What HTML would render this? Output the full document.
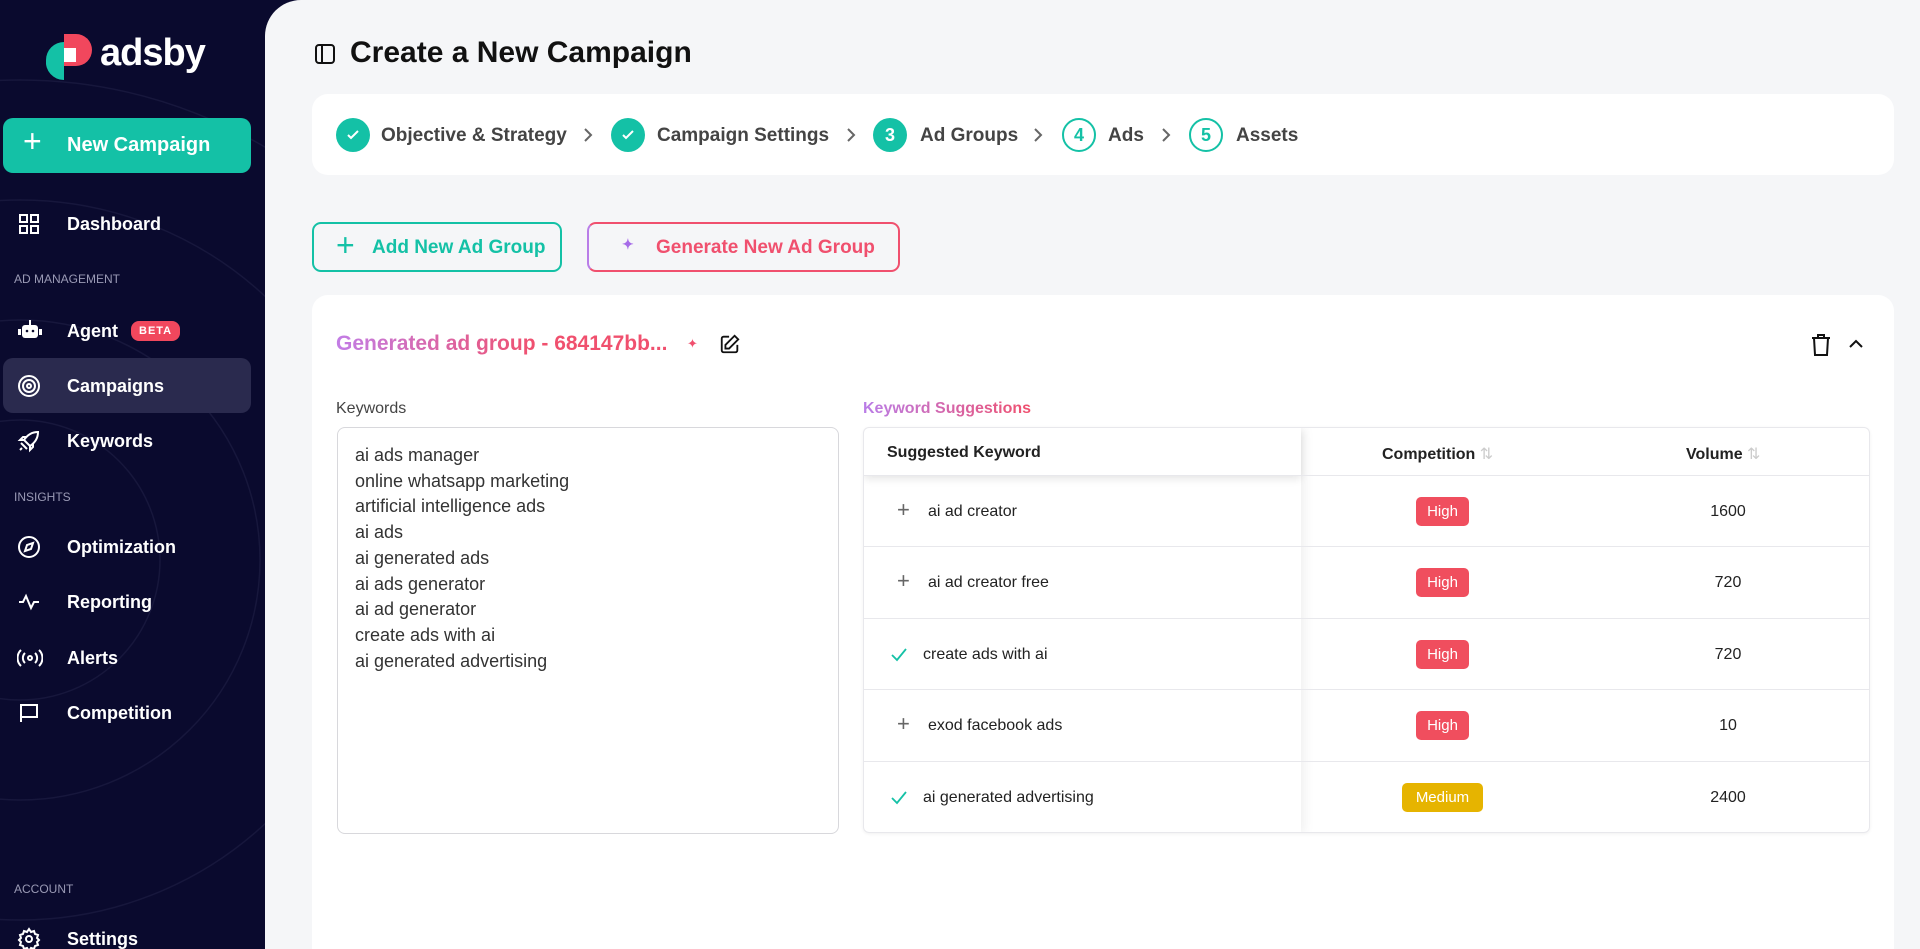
<!DOCTYPE html>
<html><head><meta charset="utf-8">
<style>
*{box-sizing:border-box;margin:0;padding:0}
html,body{width:1920px;height:949px;overflow:hidden}
body{background:#0a0a2e;font-family:"Liberation Sans",sans-serif;position:relative}
.sb{position:absolute;left:0;top:0;width:265px;height:949px;background:#0a0a2e;overflow:hidden}
.main{position:absolute;left:265px;top:0;width:1655px;height:949px;background:#f5f6f8;border-top-left-radius:36px}
.nav{position:absolute;left:0;width:265px;color:#fff;font-size:18px;font-weight:bold;display:flex;align-items:center}
.nav svg{position:absolute;left:17px}
.nav span.t{position:absolute;left:67px}
.sec{position:absolute;left:14px;color:#9a9ab5;font-size:12px}
.abs{position:absolute}
.step{position:absolute;top:118px;width:34px;height:34px;border-radius:50%;display:flex;align-items:center;justify-content:center;font-size:18px;font-weight:bold}
.full{background:#14c1a6;color:#fff}
.out{border:2px solid #14c1a6;color:#14c1a6}
.sl{position:absolute;top:125px;font-size:19px;font-weight:bold;color:#444}
.chev{position:absolute;top:126px}
.row{position:absolute;left:0;width:1007px;height:72px;border-top:1px solid #e8e8ec}
.badge{position:absolute;height:29px;border-radius:5px;color:#fff;font-size:15px;display:flex;align-items:center;justify-content:center}
.kw{position:absolute;font-size:16px;color:#222}
.vol{position:absolute;font-size:16px;color:#222;width:100px;text-align:center;left:814px}
</style></head><body>
<div class="sb">
<svg class="abs" style="left:0;top:0" width="265" height="949"><g fill="none" stroke="#17173c" stroke-width="1.5"><circle cx="20" cy="560" r="140"/><circle cx="20" cy="560" r="240"/><circle cx="20" cy="560" r="360"/><circle cx="20" cy="560" r="480"/></g></svg>
<svg class="abs" style="left:46px;top:34px" width="50" height="48" viewBox="0 0 50 48"><path d="M18 0h12a16 16 0 0 1 0 32h-12z" fill="#f1475d"/><path d="M0 26a18 18 0 0 1 18-18h0v38a18 18 0 0 1-18-20z" fill="#14c1a6"/><rect x="18" y="14" width="12" height="14" fill="#fff"/></svg>
<div class="abs" style="left:100px;top:32px;color:#fff;font-size:38px;font-weight:bold;letter-spacing:-1px">adsby</div>
<div class="abs" style="left:3px;top:118px;width:248px;height:55px;background:#14c1a6;border-radius:10px;color:#fff;font-size:20px;font-weight:bold;display:flex;align-items:center"><span style="position:absolute;left:20px;font-size:32px;font-weight:normal;top:5px">+</span><span style="position:absolute;left:64px">New Campaign</span></div>
<div class="nav" style="top:212px;height:24px"><svg width="24" height="24" viewBox="0 0 24 24" fill="none" stroke="#fff" stroke-width="2"><rect x="3" y="3" width="7" height="7"/><rect x="14" y="3" width="7" height="7"/><rect x="3" y="14" width="7" height="7"/><rect x="14" y="14" width="7" height="7"/></svg><span class="t">Dashboard</span></div>
<div class="sec" style="top:272px">AD MANAGEMENT</div>
<div class="nav" style="top:319px;height:24px"><svg width="26" height="24" viewBox="0 0 26 24"><rect x="5" y="6" width="16" height="13" rx="3" fill="#fff"/><rect x="12" y="1" width="2" height="5" fill="#fff"/><rect x="1" y="10" width="3" height="6" fill="#fff"/><rect x="22" y="10" width="3" height="6" fill="#fff"/><circle cx="10" cy="12" r="1.3" fill="#0a0a2e"/><circle cx="16" cy="12" r="1.3" fill="#0a0a2e"/></svg><span class="t">Agent</span><span style="position:absolute;left:131px;background:#f1475d;color:#fff;font-size:11px;padding:4px 8px;border-radius:8px;letter-spacing:1px">BETA</span></div>
<div class="abs" style="left:3px;top:358px;width:248px;height:55px;background:#2a2a4e;border-radius:10px"></div>
<div class="nav" style="top:374px;height:24px"><svg width="24" height="24" viewBox="0 0 24 24" fill="none" stroke="#fff" stroke-width="2"><circle cx="12" cy="12" r="10"/><circle cx="12" cy="12" r="6"/><circle cx="12" cy="12" r="2"/></svg><span class="t">Campaigns</span></div>
<div class="nav" style="top:429px;height:24px"><svg width="24" height="24" viewBox="0 0 24 24" fill="none" stroke="#fff" stroke-width="2"><path d="M4 14l6 6M7 11c4-6 9-8 14-8-0 5-2 10-8 14l-6-6zM7 11H3l3-3h4M13 17v4l3-3v-4M5 19l-2 2"/></svg><span class="t">Keywords</span></div>
<div class="sec" style="top:490px">INSIGHTS</div>
<div class="nav" style="top:535px;height:24px"><svg width="24" height="24" viewBox="0 0 24 24" fill="none" stroke="#fff" stroke-width="2"><circle cx="12" cy="12" r="10"/><path d="M16 8l-2 6-6 2 2-6z"/></svg><span class="t">Optimization</span></div>
<div class="nav" style="top:590px;height:24px"><svg width="24" height="24" viewBox="0 0 24 24" fill="none" stroke="#fff" stroke-width="2"><path d="M2 12h4l3-6 5 12 3-6h5"/></svg><span class="t">Reporting</span></div>
<div class="nav" style="top:646px;height:24px"><svg width="26" height="24" viewBox="0 0 26 24" fill="none" stroke="#fff" stroke-width="2"><circle cx="13" cy="12" r="2"/><path d="M8 7a7 7 0 0 0 0 10M18 7a7 7 0 0 1 0 10M4 4a11 11 0 0 0 0 16M22 4a11 11 0 0 1 0 16"/></svg><span class="t">Alerts</span></div>
<div class="nav" style="top:701px;height:24px"><svg width="24" height="24" viewBox="0 0 24 24" fill="none" stroke="#fff" stroke-width="2"><path d="M4 21V4h16v12H4"/></svg><span class="t">Competition</span></div>
<div class="sec" style="top:882px">ACCOUNT</div>
<div class="nav" style="top:927px;height:24px"><svg width="24" height="24" viewBox="0 0 24 24" fill="none" stroke="#fff" stroke-width="2"><circle cx="12" cy="12" r="3"/><path d="M12 2l2 3 3-1 1 3 3 1-1 3 2 2-2 2 1 3-3 1-1 3-3-1-2 3-2-3-3 1-1-3-3-1 1-3-2-2 2-2-1-3 3-1 1-3 3 1z"/></svg><span class="t">Settings</span></div>
</div>

<div class="main"></div>
<svg class="abs" style="left:313px;top:42px" width="24" height="24" viewBox="0 0 24 24" fill="none" stroke="#111" stroke-width="2"><rect x="3" y="3" width="18" height="18" rx="3"/><path d="M9 3v18"/></svg>
<div class="abs" style="left:350px;top:36px;font-size:30px;font-weight:bold;color:#111">Create a New Campaign</div>

<div class="abs" style="left:312px;top:94px;width:1582px;height:81px;background:#fff;border-radius:16px"></div>
<div class="step full" style="left:336px"><svg width="16" height="16" viewBox="0 0 16 16" fill="none" stroke="#fff" stroke-width="2"><path d="M3 8l3 3 7-7"/></svg></div>
<div class="sl" style="left:381px">Objective &amp; Strategy</div>
<svg class="chev" style="left:582px" width="12" height="18" viewBox="0 0 12 18" fill="none" stroke="#666" stroke-width="2"><path d="M3 3l6 6-6 6"/></svg>
<div class="step full" style="left:611px"><svg width="16" height="16" viewBox="0 0 16 16" fill="none" stroke="#fff" stroke-width="2"><path d="M3 8l3 3 7-7"/></svg></div>
<div class="sl" style="left:657px">Campaign Settings</div>
<svg class="chev" style="left:845px" width="12" height="18" viewBox="0 0 12 18" fill="none" stroke="#666" stroke-width="2"><path d="M3 3l6 6-6 6"/></svg>
<div class="step full" style="left:873px">3</div>
<div class="sl" style="left:920px">Ad Groups</div>
<svg class="chev" style="left:1032px" width="12" height="18" viewBox="0 0 12 18" fill="none" stroke="#666" stroke-width="2"><path d="M3 3l6 6-6 6"/></svg>
<div class="step out" style="left:1062px">4</div>
<div class="sl" style="left:1108px">Ads</div>
<svg class="chev" style="left:1160px" width="12" height="18" viewBox="0 0 12 18" fill="none" stroke="#666" stroke-width="2"><path d="M3 3l6 6-6 6"/></svg>
<div class="step out" style="left:1189px">5</div>
<div class="sl" style="left:1236px">Assets</div>

<div class="abs" style="left:312px;top:222px;width:250px;height:50px;border:2px solid #14c1a6;border-radius:9px;color:#14c1a6;font-size:19px;font-weight:bold"><span style="position:absolute;left:22px;top:3px;font-size:32px;font-weight:normal">+</span><span style="position:absolute;left:58px;top:13px">Add New Ad Group</span></div>
<div class="abs" style="left:587px;top:222px;width:313px;height:50px;border:2px solid #f0506e;border-left-color:#b97de8;border-radius:9px;color:#f0506e;font-size:19px;font-weight:bold"><span style="position:absolute;left:33px;top:12px;color:#a66be8;font-size:14px">✦</span><span style="position:absolute;left:67px;top:13px">Generate New Ad Group</span></div>

<div class="abs" style="left:312px;top:295px;width:1582px;height:654px;background:#fff;border-radius:16px 16px 0 0"></div>
<div class="abs" style="left:336px;top:332px;font-size:21px;font-weight:bold;background:linear-gradient(90deg,#c27de6,#f0506e 60%);-webkit-background-clip:text;color:transparent">Generated ad group - 684147bb...</div>
<div class="abs" style="left:687px;top:336px;color:#f0506e;font-size:13px">✦</div>
<svg class="abs" style="left:719px;top:333px" width="22" height="22" viewBox="0 0 24 24" fill="none" stroke="#111" stroke-width="2"><path d="M11 4H5a2 2 0 0 0-2 2v13a2 2 0 0 0 2 2h13a2 2 0 0 0 2-2v-6"/><path d="M17 3l4 4-10 10H7v-4z"/></svg>
<svg class="abs" style="left:1810px;top:333px" width="22" height="24" viewBox="0 0 22 24" fill="none" stroke="#111" stroke-width="2"><path d="M2 5h18M8 5V2h6v3M4 5l1 17h12l1-17"/></svg>
<svg class="abs" style="left:1847px;top:336px" width="18" height="16" viewBox="0 0 18 16" fill="none" stroke="#111" stroke-width="2"><path d="M3 11l6-6 6 6"/></svg>

<div class="abs" style="left:336px;top:400px;font-size:16px;color:#444">Keywords</div>
<div class="abs" style="left:337px;top:427px;width:502px;height:407px;border:1px solid #d8d8dc;border-radius:8px;padding:15px 17px;font-size:18px;line-height:25.7px;color:#333">ai ads manager<br>online whatsapp marketing<br>artificial intelligence ads<br>ai ads<br>ai generated ads<br>ai ads generator<br>ai ad generator<br>create ads with ai<br>ai generated advertising</div>

<div class="abs" style="left:863px;top:400px;font-size:16px;font-weight:bold;background:linear-gradient(90deg,#b97de8,#f0506e);-webkit-background-clip:text;color:transparent">Keyword Suggestions</div>
<div class="abs" style="left:863px;top:427px;width:1007px;height:406px;border:1px solid #e8e8ec;border-radius:6px;overflow:hidden;box-shadow:0 1px 3px rgba(0,0,0,.06)">
<div class="abs" style="left:0;top:0;width:437px;height:406px;box-shadow:4px 0 10px rgba(0,0,0,.06)"></div>
<div class="abs" style="left:0;top:0;width:437px;height:47px;box-shadow:0 4px 8px rgba(0,0,0,.1)"></div>
<div class="kw" style="left:23px;top:16px;font-weight:bold">Suggested Keyword</div>
<div class="kw" style="left:518px;top:16px;font-weight:bold">Competition <span style="color:#ccc;font-weight:normal">⇅</span></div>
<div class="kw" style="left:822px;top:16px;font-weight:bold">Volume <span style="color:#ccc;font-weight:normal">⇅</span></div>
<div class="row" style="top:47px"><span class="kw" style="left:33px;top:21px;color:#666;font-size:22px">+</span><span class="kw" style="left:64px;top:27px">ai ad creator</span><div class="badge" style="left:552px;top:21px;width:53px;background:#f04e5e">High</div><span class="vol" style="top:27px">1600</span></div>
<div class="row" style="top:118px"><span class="kw" style="left:33px;top:21px;color:#666;font-size:22px">+</span><span class="kw" style="left:64px;top:27px">ai ad creator free</span><div class="badge" style="left:552px;top:21px;width:53px;background:#f04e5e">High</div><span class="vol" style="top:27px">720</span></div>
<div class="row" style="top:190px"><svg class="abs" style="left:26px;top:28px" width="18" height="16" viewBox="0 0 18 16" fill="none" stroke="#14c1a6" stroke-width="1.8"><path d="M2 8l5 5 9-11"/></svg><span class="kw" style="left:59px;top:27px">create ads with ai</span><div class="badge" style="left:552px;top:21px;width:53px;background:#f04e5e">High</div><span class="vol" style="top:27px">720</span></div>
<div class="row" style="top:261px"><span class="kw" style="left:33px;top:21px;color:#666;font-size:22px">+</span><span class="kw" style="left:64px;top:27px">exod facebook ads</span><div class="badge" style="left:552px;top:21px;width:53px;background:#f04e5e">High</div><span class="vol" style="top:27px">10</span></div>
<div class="row" style="top:333px"><svg class="abs" style="left:26px;top:28px" width="18" height="16" viewBox="0 0 18 16" fill="none" stroke="#14c1a6" stroke-width="1.8"><path d="M2 8l5 5 9-11"/></svg><span class="kw" style="left:59px;top:27px">ai generated advertising</span><div class="badge" style="left:538px;top:21px;width:81px;background:#e6b400">Medium</div><span class="vol" style="top:27px">2400</span></div>
</div>
</body></html>
